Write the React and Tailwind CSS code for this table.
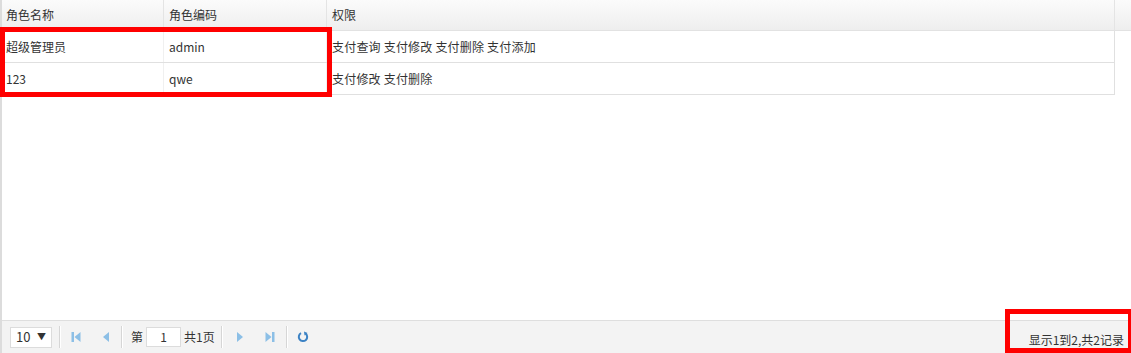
import React from "react";

const roles = [
  { name: "超级管理员", code: "admin", perms: "支付查询 支付修改 支付删除 支付添加" },
  { name: "123", code: "qwe", perms: "支付修改 支付删除" },
];

function Sep({ className = "" }) {
  return <div className={`h-[22px] w-[2px] border-l border-[#d6d6d6] border-r border-r-white ${className}`} />;
}

function NavIcon({ dir = "left", bar = false, color = "#8cbfe6" }) {
  const flip = dir === "right" ? "scale(-1,1) translate(-12,0)" : undefined;
  return (
    <svg width="12" height="12" viewBox="0 0 12 12">
      <g transform={flip}>
        {bar && <rect x="1.5" y="1" width="2.5" height="10" fill={color} />}
        <path d={bar ? "M10.5 1 L4.5 6 L10.5 11 Z" : "M9 1 L3 6 L9 11 Z"} fill={color} />
      </g>
    </svg>
  );
}

export default function App() {
  return (
    <div
      className="relative w-[1131px] h-[353px] flex flex-col bg-white text-[12px] text-[#333] border-l-2 border-[#dcdcdc]"
      style={{ fontFamily: '"Microsoft YaHei", "Noto Sans CJK SC", "Liberation Sans", sans-serif' }}
    >
      {/* table */}
      <div className="flex-1">
        <div className="flex h-[31px] items-center border-b border-[#e2e2e2] bg-gradient-to-b from-[#fbfbfb] to-[#eeeeee]">
          <div className="w-[162px] h-full flex items-center px-[4px] border-r border-[#e4e4e4]">角色名称</div>
          <div className="w-[163px] h-full flex items-center px-[5px] border-r border-[#e4e4e4]">角色编码</div>
          <div className="w-[788px] h-full flex items-center px-[5px] border-r border-[#e4e4e4]">权限</div>
          <div className="flex-1" />
        </div>
        {roles.map((r) => (
          <div key={r.code} className="flex h-[32px] w-[1113px] items-center border-b border-[#e0e0e0] border-r">
            <div className="w-[162px] h-full flex items-center px-[4px] border-r border-[#f0f0f0]">{r.name}</div>
            <div className="w-[163px] h-full flex items-center px-[5px] border-r border-[#f0f0f0]">{r.code}</div>
            <div className="flex-1 h-full flex items-center px-[5px] tracking-[0.2px]">{r.perms}</div>
          </div>
        ))}
      </div>

      {/* pager */}
      <div className="h-[33px] flex items-center border-t border-[#dedede] bg-[#f3f3f3] pl-[8px] pr-[6px]">
        <div className="w-[42px] h-[21px] bg-white border border-[#dcdcdc] flex items-center justify-between px-[5px] text-[13px]">
          <span>10</span>
          <span className="text-[9px]">▼</span>
        </div>
        <Sep className="ml-[7px]" />
        <div className="w-[30px] flex justify-center"><NavIcon bar /></div>
        <div className="w-[30px] flex justify-center"><NavIcon /></div>
        <Sep />
        <span className="ml-[8px]">第</span>
        <div className="ml-[3px] w-[35px] h-[20px] bg-white border border-[#dcdcdc] flex items-center justify-center">1</div>
        <span className="ml-[3px]">共1页</span>
        <Sep className="ml-[6px]" />
        <div className="ml-[2px] w-[30px] flex justify-center"><NavIcon dir="right" /></div>
        <div className="w-[30px] flex justify-center"><NavIcon dir="right" bar /></div>
        <Sep className="ml-[1px]" />
        <div className="ml-[3px] w-[24px] flex justify-center">
          <svg width="12" height="12" viewBox="0 0 12 12" fill="none">
            <path d="M8.6 2.6 A4.2 4.2 0 1 1 4 2.2" stroke="#3b82c4" strokeWidth="2" />
            <path d="M7 0.5 L10.5 2 L7.5 4.5 Z" fill="#3b82c4" />
          </svg>
        </div>
        <div className="flex-1" />
        <span className="mt-[6px] mr-[1px]">显示1到2,共2记录</span>
      </div>

      {/* annotation boxes */}
      <div className="absolute left-[-2px] top-[27px] w-[332px] h-[70px] border-[5px] border-[#ff0000] pointer-events-none" />
      <div className="absolute left-[1003px] top-[309px] w-[128px] h-[44px] border-[5px] border-[#ff0000] pointer-events-none" />
    </div>
  );
}
